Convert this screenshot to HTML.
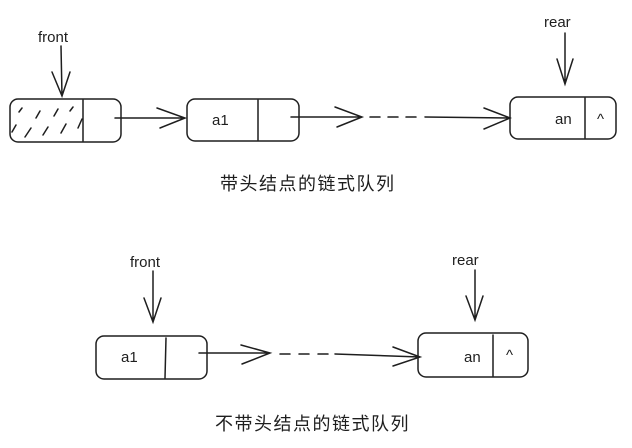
<!DOCTYPE html>
<html><head><meta charset="utf-8"><style>
html,body{margin:0;padding:0;background:#fff;width:632px;height:448px;overflow:hidden}
svg{display:block}
.h{font-family:"Liberation Sans",sans-serif;font-size:15px;fill:#1e1e1e}
.c{font-family:"Liberation Sans","Noto Sans CJK SC",sans-serif;font-size:18px;fill:#1e1e1e}
</style></head><body>
<svg width="632" height="448" viewBox="0 0 632 448" fill="none" stroke="#1e1e1e" stroke-width="1.5" stroke-linecap="round">
<!-- top row -->
<text class="h" x="38" y="42" stroke="none">front</text>
<path d="M61 46 L62 96 M52 72 L62 96 L70 72"/>
<rect x="10" y="99" width="111" height="43" rx="8"/>
<path d="M83 100 L83 141"/>
<path d="M12 132 L16 125 M19 112 L22 108 M25 137 L31 128 M36 118 L40 111 M43 135 L48 127 M54 116 L58 109 M61 133 L66 124 M70 111 L73 107 M78 128 L82 119"/>
<path d="M115 118 L185 118 M157 108 L185 118 L160 128"/>
<rect x="187" y="99" width="112" height="42" rx="8"/>
<path d="M258 100 L258 140"/>
<text class="h" x="212" y="125" stroke="none">a1</text>
<path d="M291 117 L362 117 M335 107 L362 117 L337 127"/>
<path d="M370 117 L380 117 M388 117 L398 117 M406 117 L416 117"/>
<path d="M425 117 L510 118 M484 108 L510 118 L484 129"/>
<rect x="510" y="97" width="106" height="42" rx="8"/>
<path d="M585 98 L585 138"/>
<text class="h" x="555" y="124" stroke="none">an</text>
<text class="h" x="597" y="124" stroke="none">^</text>
<text class="h" x="544" y="27" stroke="none">rear</text>
<path d="M565 33 L565 84 M557 59 L565 84 L573 59"/>
<text class="c" x="220" y="190" stroke="none" letter-spacing="1.5">带头结点的链式队列</text>
<!-- bottom row -->
<text class="h" x="130" y="267" stroke="none">front</text>
<path d="M153 271 L153 322 M144 298 L153 322 L161 298"/>
<rect x="96" y="336" width="111" height="43" rx="8"/>
<path d="M166 338 L165 378"/>
<text class="h" x="121" y="362" stroke="none">a1</text>
<path d="M199 353 L270 353 M241 345 L270 353 L242 364"/>
<path d="M280 354 L290 354 M299 354 L309 354 M318 354 L328 354"/>
<path d="M335 354 L420 357 M393 347 L420 357 L393 366"/>
<rect x="418" y="333" width="110" height="44" rx="8"/>
<path d="M493 335 L493 376"/>
<text class="h" x="464" y="362" stroke="none">an</text>
<text class="h" x="506" y="360" stroke="none">^</text>
<text class="h" x="452" y="265" stroke="none">rear</text>
<path d="M475 270 L475 320 M466 296 L475 320 L483 296"/>
<text class="c" x="215" y="430" stroke="none" letter-spacing="1.5">不带头结点的链式队列</text>
</svg>
</body></html>
